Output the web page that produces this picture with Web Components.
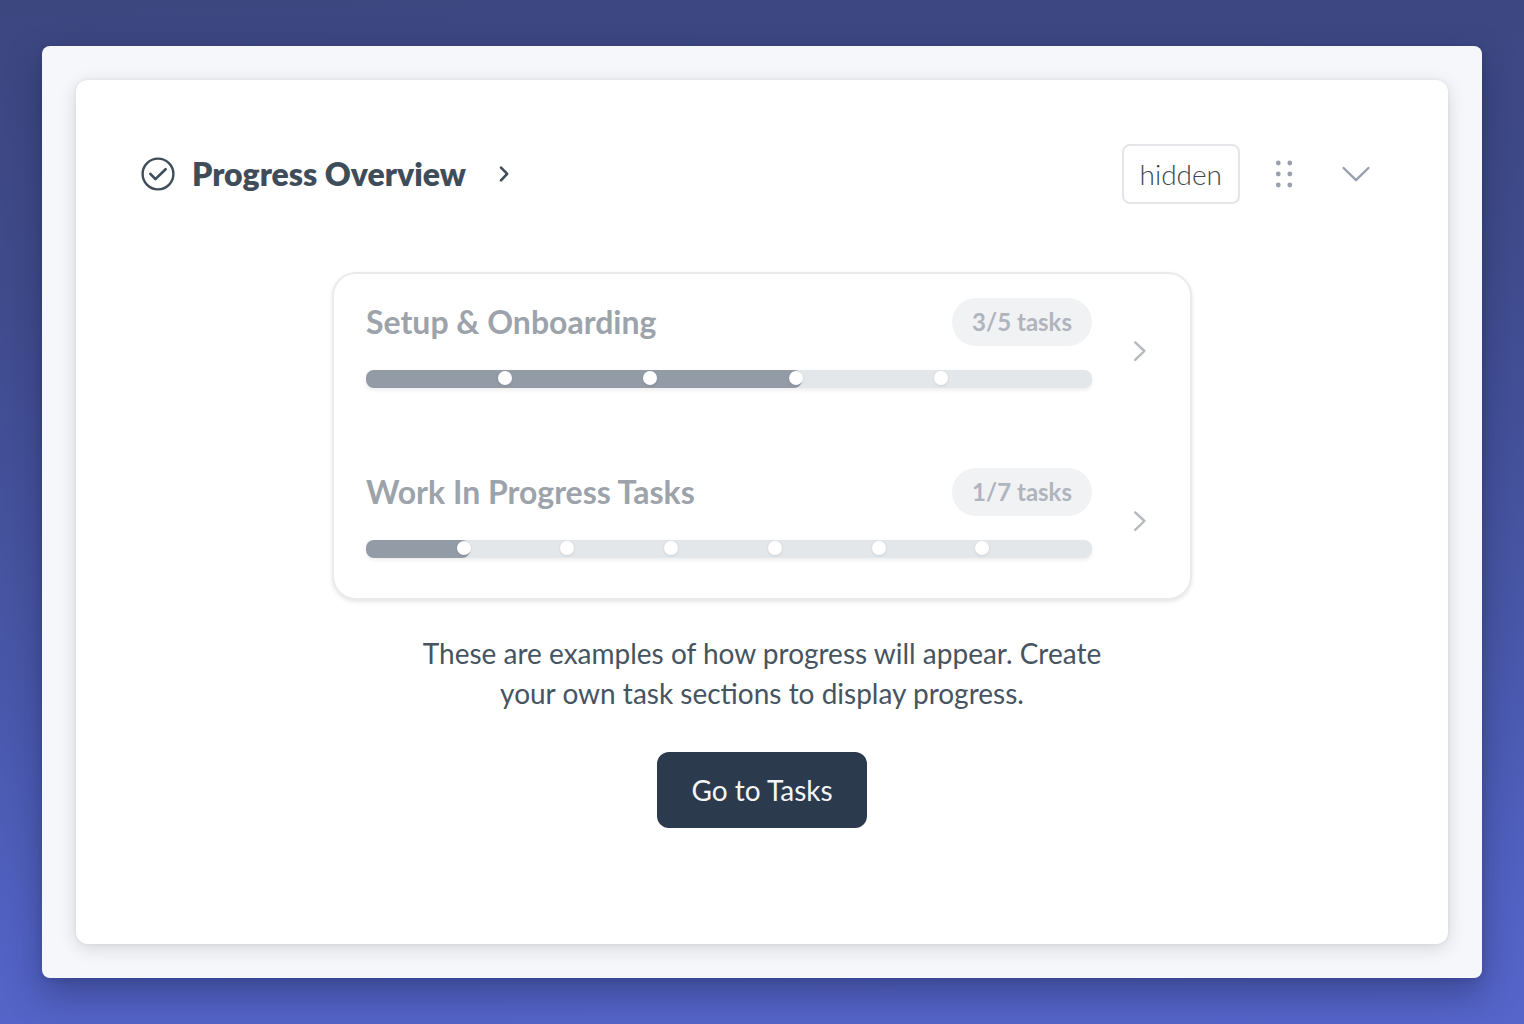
<!DOCTYPE html>
<html lang="en">
<head>
<meta charset="utf-8">
<title>Progress Overview</title>
<meta name="viewport" content="width=device-width, initial-scale=1">
<style>
body { margin: 0; font-family: Lato, "Liberation Sans", sans-serif; color: #3f4d5a; }
</style>
</head>
<body>
<app-backdrop>
  <section-card heading="Progress Overview" tag="hidden">
    <empty-state action="Go to Tasks">
      <task-list slot="preview">
        <task-progress name="Setup &amp; Onboarding" done="3" total="5"></task-progress>
        <task-progress name="Work In Progress Tasks" done="1" total="7"></task-progress>
      </task-list>
      These are examples of how progress will appear. Create your own task sections to display progress.
    </empty-state>
  </section-card>
</app-backdrop>
<script>
const reset = `
  *, :host { box-sizing: border-box; }
  button { font: inherit; color: inherit; background: none; border: 0; padding: 0; margin: 0; cursor: pointer; }
  svg { display: block; fill: none; stroke: currentColor; stroke-linecap: round; stroke-linejoin: round; }
`;
class Base extends HTMLElement {
  connectedCallback() {
    if (!this.shadowRoot) {
      this.attachShadow({ mode: "open" });
      this.shadowRoot.innerHTML = `<style>${reset}${this.styles()}</style>${this.markup()}`;
      this.fill(this.shadowRoot);
    }
  }
  fill() {}
}

customElements.define("app-backdrop", class extends Base {
  styles() { return `
    :host { display: flex; min-height: 100vh; padding: 46px 42px;
      background: linear-gradient(178deg, #3c467f 0%, #404c8e 30%, #4857a8 62%, #5262c4 88%, #5565ca 100%); }
    main { flex: 1; display: flex; padding: 34px; border-radius: 8px; background: #f5f7fb;
      box-shadow: 0 16px 36px rgba(20,26,64,.38), 0 2px 6px rgba(20,26,64,.12); }
    ::slotted(*) { flex: 1; }
  `; }
  markup() { return `<main><slot></slot></main>`; }
});

customElements.define("section-card", class extends Base {
  styles() { return `
    :host { display: flex; flex-direction: column; gap: 68px; padding: 64px; background: #fff;
      border-radius: 12px; box-shadow: 0 4px 18px rgba(0,0,0,.14), 0 0 4px rgba(0,0,0,.06); }
    header, .title, .tools { display: flex; align-items: center; }
    header { justify-content: space-between; }
    .title { gap: 16px; }
    h1 { margin: 0; font-size: 32px; line-height: 40px; font-weight: 800; }
    .title button { padding: 8px 14px; }
    .tools { color: #98a0af; gap: 24px; }
    .tag { height: 60px; padding: 0 16px; border: 2px solid #e4e5e8; border-radius: 8px;
      font-size: 28px; line-height: 56px; font-weight: 300; color: #41464e; }
    .tools button:not(.tag) { padding: 8px; }
    .dots { fill: currentColor; stroke: none; }
  `; }
  markup() { return `
    <header>
      <div class="title">
        <svg width="36" height="36" viewBox="0 0 36 36" stroke-width="2.4" aria-hidden="true"><circle cx="18" cy="18" r="15.4"/><path d="M10.4 17.9l5 5.2 10.2-9.8" stroke-width="2.7"/></svg>
        <h1></h1>
        <button type="button" aria-label="Open section"><svg width="16" height="20" viewBox="0 0 16 20" stroke-width="2.6"><path d="M5 3.6l6.2 6.2L5 16.4"/></svg></button>
      </div>
      <div class="tools">
        <button class="tag" type="button"></button>
        <button type="button" aria-label="Drag section"><svg class="dots" width="24" height="32" viewBox="0 0 24 32"><circle cx="6.3" cy="5" r="2.4"/><circle cx="17.8" cy="5" r="2.4"/><circle cx="6.3" cy="16" r="2.4"/><circle cx="17.8" cy="16" r="2.4"/><circle cx="6.3" cy="27" r="2.4"/><circle cx="17.8" cy="27" r="2.4"/></svg></button>
        <button type="button" aria-label="Collapse section"><svg width="40" height="32" viewBox="0 0 40 32" stroke-width="2.4"><path d="M7.6 10L20 22.2 32.4 10"/></svg></button>
      </div>
    </header>
    <slot></slot>`; }
  fill(root) {
    root.querySelector("h1").textContent = this.getAttribute("heading");
    root.querySelector(".tag").textContent = this.getAttribute("tag");
  }
});

customElements.define("empty-state", class extends Base {
  styles() { return `
    :host { display: flex; flex-direction: column; align-items: center; }
    ::slotted(task-list) { width: 100%; max-width: 860px; }
    p { margin: 33px 0 39px; max-width: 720px; text-align: center; font-size: 28px; line-height: 40px; font-weight: 400; color: #465462; }
    button { height: 76px; padding: 0 34px; border-radius: 12px; background: #2c3a4d; color: #f3f5f7; font-size: 28px; line-height: 40px; font-weight: 400; }
  `; }
  markup() { return `<slot name="preview"></slot><p><slot></slot></p><button type="button"></button>`; }
  fill(root) { root.querySelector("button").textContent = this.getAttribute("action"); }
});

customElements.define("task-list", class extends Base {
  styles() { return `
    :host { display: flex; flex-direction: column; gap: 64px; padding: 24px 32px; border: 2px solid #ebebed;
      border-radius: 24px; background: #fff; box-shadow: 0 2px 4px rgba(0,0,0,.1); }
  `; }
  markup() { return `<slot></slot>`; }
});

customElements.define("task-progress", class extends Base {
  styles() { return `
    :host { display: flex; align-items: center; gap: 28px; min-height: 106px; }
    .body { flex: 1; align-self: flex-start; display: flex; flex-direction: column; gap: 24px; }
    .head { display: flex; justify-content: space-between; align-items: center; }
    h2 { margin: 0; font-size: 32px; line-height: 40px; font-weight: 700; color: #9ca3ab; }
    .count { padding: 0 20px; border-radius: 24px; background: #f1f2f4; color: #b0b4bc; font-size: 24px; line-height: 48px; font-weight: 700; }
    .track { display: grid; height: 18px; border-radius: 8px; background: #e4e7ea; box-shadow: 0 2px 4px rgba(0,0,0,.08); }
    .fill, .steps { grid-area: 1 / 1; }
    .fill { border-radius: 8px; background: #939ba6; }
    .steps { display: flex; padding-top: 1px; }
    .steps span { flex: 1; display: flex; justify-content: flex-end; }
    .steps span:not(:last-child)::after { content: ""; width: 14px; height: 14px; margin-right: -1px; border-radius: 50%; background: #fff; box-shadow: 0 1px 3px rgba(0,0,0,.1); }
    button { padding: 8px; color: #b5b9bf; }
  `; }
  markup() { return `
    <div class="body">
      <div class="head"><h2 id="name"></h2><span class="count"></span></div>
      <div class="track" role="progressbar" aria-labelledby="name" aria-valuemin="0"><div class="fill"></div><div class="steps"></div></div>
    </div>
    <button type="button" aria-label="Open tasks"><svg width="22" height="28" viewBox="0 0 22 28" stroke-width="2.4"><path d="M7.2 5.4L16.4 14 7.2 22.8"/></svg></button>`; }
  fill(root) {
    const done = +this.getAttribute("done"), total = +this.getAttribute("total");
    root.querySelector("h2").textContent = this.getAttribute("name");
    root.querySelector(".count").textContent = `${done}/${total} tasks`;
    root.querySelector(".fill").style.width = `${done / total * 100}%`;
    root.querySelector(".steps").innerHTML = "<span></span>".repeat(total);
    const track = root.querySelector(".track");
    track.setAttribute("aria-valuenow", done);
    track.setAttribute("aria-valuemax", total);
  }
});
</script>
</body>
</html>
